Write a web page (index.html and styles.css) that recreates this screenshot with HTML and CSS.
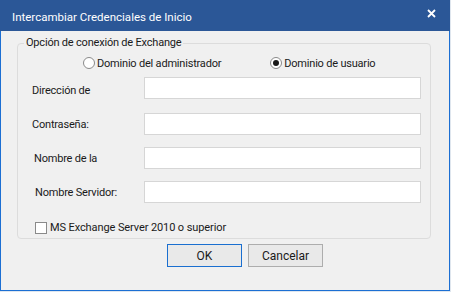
FILE: index.html
```html
<!DOCTYPE html>
<html lang="es">
<head>
  <meta charset="UTF-8" />
  <title>Intercambiar Credenciales de Inicio</title>
  <link rel="stylesheet" href="styles.css">
</head>
<body>
  <div class="window">
    <div class="titlebar">
      <span class="title">Intercambiar Credenciales de Inicio</span>
      <svg class="close" width="9" height="9" viewBox="0 0 9 9">
        <path d="M1 1 L8 8 M8 1 L1 8" stroke="#fff" stroke-width="1.8" fill="none"/>
      </svg>
    </div>

    <div class="content">
      <fieldset class="group">
        <legend>Opción de conexión de Exchange</legend>

        <div class="radios">
          <label class="radio"><span class="dot"></span>Dominio del administrador</label>
          <label class="radio checked"><span class="dot"></span>Dominio de usuario</label>
        </div>

        <div class="row first">
          <span class="lbl lbl-1">Dirección de</span>
          <div class="field"></div>
        </div>
        <div class="row second">
          <span class="lbl">Contraseña:</span>
          <div class="field"></div>
        </div>
        <div class="row">
          <span class="lbl lbl-3">Nombre de la</span>
          <div class="field"></div>
        </div>
        <div class="row">
          <span class="lbl lbl-4">Nombre Servidor:</span>
          <div class="field"></div>
        </div>

        <label class="check"><span class="box"></span>MS Exchange Server 2010 o superior</label>
      </fieldset>

      <div class="buttons">
        <button class="btn btn-ok">OK</button>
        <button class="btn">Cancelar</button>
      </div>
    </div>
  </div>
</body>
</html>
```

FILE: styles.css
```css
* {
  box-sizing: border-box;
}

body {
  margin: 0;
  background: #dfe6ee;
  font-family: Roboto, 'Open Sans', sans-serif;
  font-size: 11px;
  letter-spacing: -0.2px;
  color: #1a1a1a;
}

.window {
  width: 450px;
  height: 291px;
  background: #f0f0f0;
  border: 1px solid #1c6fd3;
  border-top: none;
}

.titlebar {
  height: 31px;
  margin: 0 -1px;
  background: #2b5797;
  color: #fff;
  display: flex;
  align-items: center;
  justify-content: space-between;
  padding: 2px 14px 0 12px;
}

.title {
  font-size: 11.5px;
  letter-spacing: 0;
}

.close {
  margin-top: -6px;
}

.content {
  padding: 5px 0 0 16px;
}

.group {
  width: 414px;
  height: 203px;
  margin: 0;
  padding: 0;
  border: 1px solid #dcdcdc;
  border-radius: 4px;
}

.group legend {
  margin-left: 6px;
  padding: 0 2px;
  line-height: 14px;
}

.radios {
  display: flex;
  margin-top: 6px;
  height: 14px;
  align-items: center;
}

.radio {
  display: flex;
  align-items: center;
}

.radio:first-child {
  margin-left: 65px;
}

.radio + .radio {
  margin-left: 49px;
}

.dot {
  width: 12px;
  height: 12px;
  border: 1px solid #8a8a8a;
  border-radius: 50%;
  background: #fff;
  margin-right: 2px;
  position: relative;
}

.checked .dot::after {
  content: '';
  position: absolute;
  left: 2px;
  top: 2px;
  width: 6px;
  height: 6px;
  border-radius: 50%;
  background: #1a1a1a;
}

.row {
  display: flex;
  align-items: center;
  margin-top: 12px;
  height: 22px;
}

.row.first {
  margin-top: 7px;
}

.row.second {
  margin-top: 14px;
}

.lbl {
  width: 126px;
  padding-left: 14px;
}

.lbl-1 {
  padding-top: 5px;
}

.lbl-3 {
  padding-left: 16px;
}

.lbl-4 {
  padding-left: 17px;
}

.field {
  width: 277px;
  height: 22px;
  background: #fff;
  border: 1px solid #d6d6d6;
}

.check {
  display: flex;
  align-items: center;
  margin: 18px 0 0 17px;
  letter-spacing: -0.1px;
}

.box {
  width: 12px;
  height: 12px;
  border: 1px solid #8a8a8a;
  background: #fff;
  margin-right: 3px;
}

.buttons {
  display: flex;
  gap: 6px;
  padding-left: 150px;
  margin-top: 5px;
}

.btn {
  width: 75px;
  height: 23px;
  font-family: inherit;
  font-size: 12px;
  letter-spacing: 0;
  color: #1a1a1a;
  background: #e9e9e9;
  border: 1px solid #adadad;
  padding: 0;
}

.btn-ok {
  border: 1px solid #1a6fd0;
}
```
